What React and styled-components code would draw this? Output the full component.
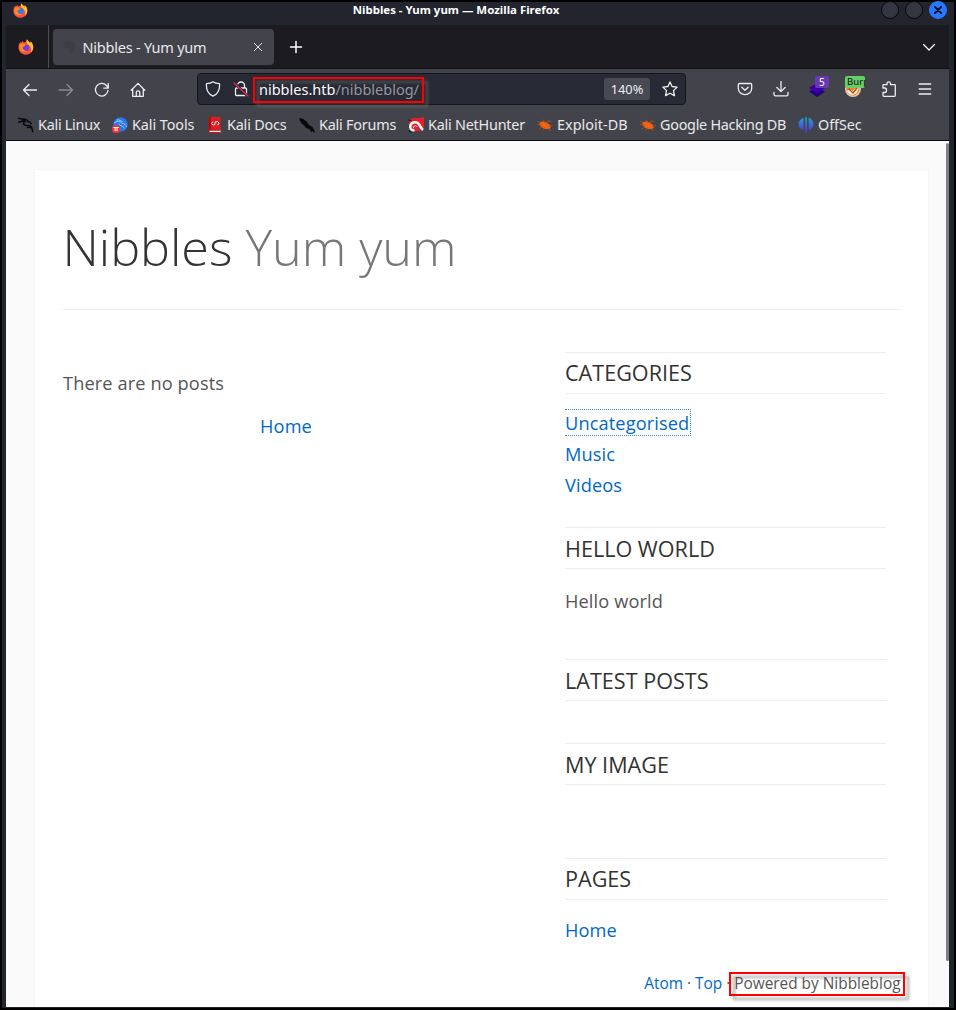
import React from 'react';
import styled, { createGlobalStyle } from 'styled-components';

const GlobalStyle = createGlobalStyle`
  *, *::before, *::after { box-sizing: border-box; }
  html, body, #root { height: 100%; }
  body { margin: 0; background: #000; overflow: hidden; font-family: "Noto Sans", sans-serif; }
  svg { display: block; flex: none; }
`;

const Desktop = styled.div`
  height: 1010px;
  width: 956px;
  padding: 2px;
  background: #000;
`;

const Window = styled.div`
  display: flex;
  flex-direction: column;
  height: 1006px;
  width: 952px;
  background: #22242e;
`;

const TitleBar = styled.header`
  display: grid;
  grid-template-columns: 28px 852px 72px;
  align-items: start;
  height: 23px;
  color: #fff;
  > svg { margin: 1px 0 0 11px; }
`;

const WindowTitle = styled.div`
  text-align: center;
  font-size: 11.45px;
  font-weight: 700;
  line-height: 16px;
`;

const WindowButtons = styled.div`
  display: flex;
  gap: 6px;
  margin-left: -1px;
`;

const WindowButton = styled.span`
  display: grid;
  place-items: center;
  width: 18px;
  height: 18px;
  margin-top: -1px;
  border-radius: 50%;
  border: 1px solid ${p => (p.$close ? '#2777ff' : '#07080b')};
  background: ${p => (p.$close ? '#2777ff' : '#343741')};
`;

const Frame = styled.div`
  display: flex;
  flex-direction: column;
  margin: 0 5px 0 4px;
  height: 982px;
`;

const TabStrip = styled.nav`
  display: flex;
  height: 44px;
  background: #1b1b20;
  border-bottom: 1px solid #111115;
`;

const PinnedArea = styled.div`
  display: grid;
  place-items: center;
  width: 43px;
  border-right: 1px solid #4c4c52;
  padding-right: 2px;
`;

const Tab = styled.div`
  display: flex;
  align-items: center;
  width: 221px;
  height: 36px;
  margin: 4px 0 0 4px;
  padding: 0 10px 0 9px;
  border-radius: 4px;
  background: #43444b;
  color: #e8e8ec;
  font-size: 14.5px;
`;

const TabTitle = styled.span`
  flex: 1;
  margin-left: 4.5px;
  letter-spacing: -0.22px;
`;

const NewTab = styled.div`
  display: grid;
  place-items: center;
  width: 43px;
  padding-top: 1px;
`;

const AllTabs = styled.div`
  display: grid;
  place-items: center;
  width: 40px;
  margin-left: auto;
`;

const NavBar = styled.div`
  display: flex;
  align-items: center;
  height: 40px;
  background: #43444b;
  color: #ededf1;
  padding-left: 16px;
`;

const NavButtons = styled.div`
  display: flex;
  gap: 20px;
  width: 175px;
  padding-top: 1px;
`;

const UrlBar = styled.div`
  display: flex;
  align-items: center;
  width: 489px;
  height: 32px;
  padding: 0 7px;
  border: 1px solid #15161b;
  border-radius: 4px;
  background: #272934;
`;

const UrlIcons = styled.div`
  display: flex;
  gap: 12px;
`;

const Highlight = styled.div`
  position: relative;
  &::after {
    content: '';
    position: absolute;
    top: ${p => p.$top}px;
    left: ${p => p.$left}px;
    width: ${p => p.$width}px;
    height: ${p => p.$height}px;
    border: 2px solid #fe0000;
    filter: drop-shadow(4px 4px 1.5px ${p => p.$shadow});
  }
`;

const UrlText = styled(Highlight)`
  margin-left: 10px;
  flex: 1;
  font-size: 14.5px;
  line-height: 20px;
  color: #96969f;
  b { color: #fbfbfe; font-weight: 400; }
`;

const ZoomLevel = styled.span`
  width: 46px;
  height: 22px;
  margin-right: 12px;
  border-radius: 3px;
  background: #474953;
  font-size: 12.8px;
  line-height: 22px;
  text-align: center;
`;

const Actions = styled.div`
  display: flex;
  gap: 20px;
  margin-left: 51px;
`;

const Extension = styled.div`
  position: relative;
  width: 16px;
  height: 16px;
`;

const Badge = styled.span`
  position: absolute;
  top: -5px;
  left: ${p => p.$left}px;
  width: ${p => p.$width}px;
  height: 12px;
  overflow: ${p => (p.$clip ? 'hidden' : 'visible')};
  border-radius: 2px;
  background: ${p => p.$bg};
  color: ${p => p.$fg};
  font-size: ${p => (p.$clip ? 9.6 : 10)}px;
  line-height: 12px;
  padding-left: ${p => p.$pad}px;
`;

const Bookmarks = styled.div`
  display: flex;
  align-items: center;
  height: 32px;
  padding: 1px 0 0 12px;
  background: #43444b;
  border-bottom: 1px solid #0c0c10;
  color: #e8e8ec;
`;

const Bookmark = styled.div`
  display: flex;
  align-items: center;
  gap: 4px;
  width: ${p => p.$width}px;
  font-size: 14.4px;
  line-height: 20px;
  letter-spacing: ${p => p.$tracking}px;
  white-space: nowrap;
`;

const Viewport = styled.div`
  display: flex;
  height: 866px;
  overflow: hidden;
  background: #fafafa;
`;

const Page = styled.div`
  flex: 1;
  padding: 28px 17px 0 28px;
`;

const ScrollTrack = styled.div`
  width: 4px;
  padding-top: 2px;
`;

const ScrollThumb = styled.div`
  width: 3px;
  height: 818px;
  border-radius: 2px;
  background: #808084;
`;

const Card = styled.main`
  width: 895px;
  height: 860px;
  padding: 0 28px;
  border: 1px solid #f6f6f6;
  background: #fff;
  font-family: "Open Sans", sans-serif;
  font-size: 18.2px;
  letter-spacing: 0.12px;
  color: #555;
`;

const BlogHeader = styled.header`
  height: 140px;
  padding-top: 42px;
  border-bottom: 1px solid #eee;
`;

const BlogTitle = styled.h1`
  margin: 0 0 0 -0.5px;
  font-size: 50.4px;
  line-height: 70px;
  font-weight: 300;
  letter-spacing: -0.05px;
  color: #333;
  span { color: #777; }
`;

const Columns = styled.div`
  display: flex;
`;

const Posts = styled.section`
  width: 446px;
  margin-right: 56px;
  padding-top: 58px;
`;

const Text = styled.p`
  margin: 0;
  line-height: 31px;
`;

const Pager = styled(Text)`
  margin-top: 12px;
  text-align: center;
`;

const Link = styled.a`
  color: #0069c4;
  ${p => p.$focused && 'border: 1px dotted #2f8bd0; border-left: 0; padding: 1px 1px 0 0;'}
`;

const Sidebar = styled.aside`
  width: 321px;
  padding-top: 42px;
`;

const Widget = styled.section`
  height: ${p => p.$height}px;
`;

const WidgetTitle = styled.h2`
  margin: 0 0 ${p => p.$gap || 14}px;
  height: 42px;
  border: solid #eee;
  border-width: 1px 0;
  font-size: 21.6px;
  line-height: ${p => p.$line || 41}px;
  letter-spacing: 0;
  font-weight: 400;
  color: #333;
  text-transform: uppercase;
`;

const Footer = styled.footer`
  display: flex;
  justify-content: flex-end;
  gap: 4px;
  margin: 3px -0.5px 0 0;
  font-size: 15.4px;
  line-height: 24px;
  letter-spacing: 0;
`;

const Icon = ({ children, size = 16, ...rest }) => (
  <svg width={size} height={size} viewBox="0 0 16 16" fill="none" stroke="currentColor" strokeWidth="1.3" strokeLinecap="round" strokeLinejoin="round" {...rest}>{children}</svg>
);

const Firefox = ({ size, core }) => (
  <Icon size={size} stroke="none">
    <path d="M1 5 2.3 2.7 3 4l2-2.2.4 1.8L8 3l1-2.700c.4 1.500 2 2.100 3 3.400l.4-1.200c2 1.400 3.200 4 2.800 6.500C14.700 13 11.500 15.700 8 15.700S.8 13 .5 9.200C.4 7.500.6 6 1 5Z" fill="#ff4f3a" />
    <path d="M9 .3c.4 1.500 2.300 2.500 3.300 4.200L12.500 2.500c2 1.500 3 4 2.700 6.500-.3 2-1.200 3.500-2.600 4.700 1.500-3.500.2-6.700-2.600-8.200C8.300 4.400 8.100 2 9 .3Z" fill="#ffc52b" />
    <circle cx="8" cy="8.700" r="3.300" fill={core} />
    <path d="M2 5.200c1.700-1 3.500-1 5.700.2L6.500 7.200 4.500 8c.3 2.800 2.500 4.500 5 4-3.300 2.500-8 .2-8-4 0-.9 0-1.900.5-2.800Z" fill="#ff8a26" />
  </Icon>
);

const Dragon = () => (
  <Icon stroke="#0b0b0d" strokeWidth="1.500">
    <path d="M.8 1.200 5 2.200l2.500 2.500L4.500 4 .8 5.300M5 2c2.500-.2 4.200 1 5.200 2.800M6.500 4.500C5 6 5.200 7.800 7.500 8.200l3 .2c2.500.3 3.300 1.700 3.600 3.600l.5 2.700M13.500 11c-1-.9-2.400-1-4-.6M10 4.600l2.200.6 1 1.600" />
  </Icon>
);

const Tools = () => (
  <Icon stroke="none">
    <circle cx="8.500" cy="7.500" r="7.200" fill="#2878ee" />
    <path d="M2.500 5.500c4-2 7-.8 8.200 1 2 .2 3.200 1.300 3.700 3M5 3c2.500-.4 4.500.5 5.500 2M7 7c.2 2 3.300 1.200 5.300 4" stroke="#a9cbff" strokeWidth="1" />
    <rect x="0" y="8" width="8" height="8" rx="3.500" fill="#ef3038" />
    <path d="M1.800 10.500h4.500M3.100 10.700v3.200M5 10.700v3.200" stroke="#fff" strokeWidth="1" />
  </Icon>
);

const Docs = () => (
  <Icon stroke="none">
    <path d="M1.500 0h12v13h-12z" fill="#df1c20" />
    <path d="M1.500 0H4v15H1.500z" fill="#a90e12" />
    <path d="M2.500 13h11v3h-11z" fill="#eee" />
    <path d="M1.500 12.700h12v1h-12zM1.500 15h12v1h-12z" fill="#c5181c" />
    <path d="m5.500 5-1 1.500 1.500 1.500M10.500 4.500 12 6.200 10.800 8M6.800 7.800c1 .3 1.400-.3 1.200-1.500-.2-1.400.4-2 1.600-1.500" stroke="#fff" strokeWidth="1" />
  </Icon>
);

const Forums = () => (
  <Icon stroke="none">
    <path d="M.5 1 4 1.800 6.300 3.700l1.600 1 2 3.200 3.500 2L15.500 13.500l.5 2.500-3-2-.5 1.500-1.700-3L7 10.800 4.800 8.200 2.500 6.500 2 5 .5 3.500Z" fill="#08080a" />
  </Icon>
);

const NetHunter = () => (
  <Icon stroke="none">
    <path d="M1 3 5 1h7l4-1v10l-2 3-4 1H4L1 9Z" fill="#e3202b" />
    <path d="M6.500 13C3 14 1.500 11 2.500 8.300 3.800 5 8.500 4 11 7.200c1.200 1.600 1.800 3.800 4 5.800" stroke="#f5f5f5" strokeWidth="2.600" strokeLinecap="butt" />
    <path d="M5.500 10.500c0-2 2.500-2.500 3.500-1" stroke="#f5f5f5" strokeWidth="1" />
    <path d="M0 3 3 3.500M1 13.500l2 1.500" stroke="#1b1b20" strokeWidth="1.200" />
  </Icon>
);

const Bug = () => (
  <Icon stroke="#c65119" strokeWidth=".7">
    <ellipse cx="8" cy="8.300" rx="6" ry="3.200" transform="rotate(24 8 8.300)" fill="#f26313" stroke="none" />
    <path d="M4 6 1 4.500M4.500 8 .5 7.500M5 9.500 2 12M8 6 6.500 3M10 7l1-3 3 .2M12 9.500l3.500-1M11 11.500l2.500 2M7.500 10.500 6 13" />
  </Icon>
);

const OffSec = () => (
  <Icon stroke="none">
    <defs><linearGradient id="os" x2="0" y2="1"><stop stopColor="#18a6ce" /><stop offset="1" stopColor="#6526db" /></linearGradient></defs>
    <path d="M5.500.8v12.500C2.500 12.300.5 10.500.5 7.300S3 1.800 5.500.8Zm1.700-.5h1.800V16L7.200 15ZM10.700.8c3 1 4.800 3.300 4.800 6.500s-1.800 5-4.800 6Z" fill="url(#os)" />
  </Icon>
);

const Plus = () => <Icon color="#fff" strokeWidth="1.500"><path d="M8 2.500v11M2.500 8h11" /></Icon>;
const Chevron = () => <Icon color="#fff"><path d="m2.500 5.500 5.500 5.500 5.500-5.500" /></Icon>;
const Cross = ({ size, ...rest }) => <Icon size={size} {...rest}><path d="m3 3 10 10M13 3 3 13" /></Icon>;
const Back = () => <Icon><path d="M14.500 8h-13M7 2.500 1.500 8 7 13.500" /></Icon>;
const Forward = () => <Icon opacity=".42"><path d="M1 8h13.500M9 2.500 14.500 8 9 13.500" /></Icon>;
const Reload = () => <Icon><path d="M14 8.500A6.300 6.300 0 1 1 12.400 3.500L14 5.500M14.300 1.500v4.600H9.700" /></Icon>;
const HomeIcon = () => <Icon><path d="M1.200 8.200 8 1.400l6.800 6.800M2.700 7v7.300h10.600V7M6.300 14.200V10c0-.8.6-1.200 1.700-1.200s1.700.4 1.700 1.200v4.200" /></Icon>;
const Shield = () => <Icon><path d="M8 .8c2 1.500 4 1.800 6.500 1.900.5 5.500-1.200 10-6.500 12.500C2.700 12.700 1 8.200 1.500 2.700 4 2.600 6 2.300 8 .8Z" /></Icon>;
const Lock = () => (
  <Icon>
    <path d="M4.500 7V4.500a3.500 3.500 0 0 1 7 0V7M3.500 7h9a1 1 0 0 1 1 1v5.500a1 1 0 0 1-1 1h-9a1 1 0 0 1-1-1V8a1 1 0 0 1 1-1Z" />
    <path d="m1.500 2 13 13" stroke="#272934" strokeWidth="2.600" />
    <path d="m1 2 14 13" stroke="#e22850" />
  </Icon>
);
const Star = () => <Icon><path d="m8 .9 2.100 4.600 5 .6-3.600 3.500.9 5L8 12.200l-4.400 2.400.9-5L.9 6.100l5-.6Z" /></Icon>;
const Pocket = () => <Icon><path d="M2.500 2.500h11c.8 0 1.200.5 1.200 1.200v3.500c0 3.700-3 6.500-6.700 6.500S1.300 10.900 1.300 7.200V3.700c0-.7.4-1.200 1.200-1.200ZM4.800 6.200 8 9.200l3.200-3" /></Icon>;
const Download = () => <Icon><path d="M8 .5v10M3.900 6.500 8 10.600l4.100-4.100M1 11.500v2c0 .8.5 1.300 1.300 1.300h11.400c.8 0 1.300-.5 1.300-1.300v-2" /></Icon>;
const Puzzle = () => <Icon><path d="M2 7V4.500c0-.5.300-.8.800-.8H6V2.500C6 .3 9.500.3 9.500 2.500v1.200h4c.5 0 .8.300.8.800v10c0 .5-.3.800-.8.800H2.800c-.5 0-.8-.3-.8-.8v-3h1.800c2.300 0 2.300-4.500 0-4.500Z" /></Icon>;
const Menu = () => <Icon><path d="M2.200 3h11.500M2.200 8h11.500M2.200 13h11.500" /></Icon>;

const bookmarks = [
  ['Kali Linux', Dragon, 94, -0.27],
  ['Kali Tools', Tools, 95, -0.08],
  ['Kali Docs', Docs, 92, -0.18],
  ['Kali Forums', Forums, 109, -0.22],
  ['Kali NetHunter', NetHunter, 129, -0.23],
  ['Exploit-DB', Bug, 103, 0.04],
  ['Google Hacking DB', Bug, 158, -0.27],
  ['OffSec', OffSec, 70, -0.08],
];

export default function App() {
  return (
    <>
      <GlobalStyle />
      <Desktop>
        <Window>
          <TitleBar>
            <Firefox size={15} core="#3979e8" />
            <WindowTitle>Nibbles - Yum yum — Mozilla Firefox</WindowTitle>
            <WindowButtons>
              <WindowButton /><WindowButton />
              <WindowButton $close><Cross size={10} stroke="#050a16" strokeWidth="3" /></WindowButton>
            </WindowButtons>
          </TitleBar>
          <Frame>
            <TabStrip>
              <PinnedArea><Firefox size={16} core="#7040d9" /></PinnedArea>
              <Tab>
                <Icon stroke="none"><path d="M2 3 6 1l6 2 2 5-4 6-4-1 1-4-4 1-2-4Z" fill="#3e3f46" /></Icon>
                <TabTitle>Nibbles - Yum yum</TabTitle>
                <Cross size={12} />
              </Tab>
              <NewTab><Plus /></NewTab>
              <AllTabs><Chevron /></AllTabs>
            </TabStrip>
            <NavBar>
              <NavButtons><Back /><Forward /><Reload /><HomeIcon /></NavButtons>
              <UrlBar>
                <UrlIcons><Shield /><Lock /></UrlIcons>
                <UrlText $top={-2} $left={-6} $width={171} $height={26} $shadow="rgba(120,120,116,0.55)">
                  <b>nibbles.htb</b>/nibbleblog/
                </UrlText>
                <ZoomLevel>140%</ZoomLevel>
                <Star />
              </UrlBar>
              <Actions>
                <Pocket />
                <Download />
                <Extension>
                  <Icon stroke="none"><path d="m0 10.500 8-4.500 8 4.500L8 16Z" fill="#220079" /><path d="M0 7 8 2l8 5-8 5.500Z" fill="#3d00a7" /></Icon>
                  <Badge $left={6} $width={14} $pad={4} $bg="#6739b7" $fg="#fff">5</Badge>
                </Extension>
                <Extension>
                  <Icon stroke="none"><circle cx="8" cy="8" r="8" fill="#dfc9b1" /><circle cx="8" cy="8" r="6.500" fill="#f58220" /><path d="M2 10c2-2 4-2 6 0 2-3 4-3 6-4l-2 6-4 2-4-1Z" fill="#fff1dd" /><path d="m4 8 4 4 4-5" stroke="#a54d16" /></Icon>
                  <Badge $clip $left={0} $width={20} $pad={2} $bg="#65cd69" $fg="#111">Burp</Badge>
                </Extension>
                <Puzzle />
                <Menu />
              </Actions>
            </NavBar>
            <Bookmarks>
              {bookmarks.map(([name, Glyph, width, tracking]) => (
                <Bookmark key={name} $width={width} $tracking={tracking}><Glyph />{name}</Bookmark>
              ))}
            </Bookmarks>
            <Viewport>
              <Page>
                <Card>
                  <BlogHeader>
                    <BlogTitle>Nibbles <span>Yum yum</span></BlogTitle>
                  </BlogHeader>
                  <Columns>
                    <Posts>
                      <Text>There are no posts</Text>
                      <Pager><Link>Home</Link></Pager>
                    </Posts>
                    <Sidebar>
                      <Widget $height={175}>
                        <WidgetTitle $line={39}>Categories</WidgetTitle>
                        <Text><Link $focused>Uncategorised</Link></Text>
                        <Text><Link>Music</Link></Text>
                        <Text><Link>Videos</Link></Text>
                      </Widget>
                      <Widget $height={132}>
                        <WidgetTitle $gap={17}>Hello world</WidgetTitle>
                        <Text>Hello world</Text>
                      </Widget>
                      <Widget $height={84}><WidgetTitle>Latest posts</WidgetTitle></Widget>
                      <Widget $height={115}><WidgetTitle>My image</WidgetTitle></Widget>
                      <Widget $height={111}>
                        <WidgetTitle $line={39} $gap={15}>Pages</WidgetTitle>
                        <Text><Link>Home</Link></Text>
                      </Widget>
                    </Sidebar>
                  </Columns>
                  <Footer>
                    <Link>Atom</Link><span>·</span><Link>Top</Link><span>·</span>
                    <Highlight $top={0} $left={-5} $width={176} $height={24} $shadow="rgba(90,90,90,0.55)">Powered by Nibbleblog</Highlight>
                  </Footer>
                </Card>
              </Page>
              <ScrollTrack><ScrollThumb /></ScrollTrack>
            </Viewport>
          </Frame>
        </Window>
      </Desktop>
    </>
  );
}
